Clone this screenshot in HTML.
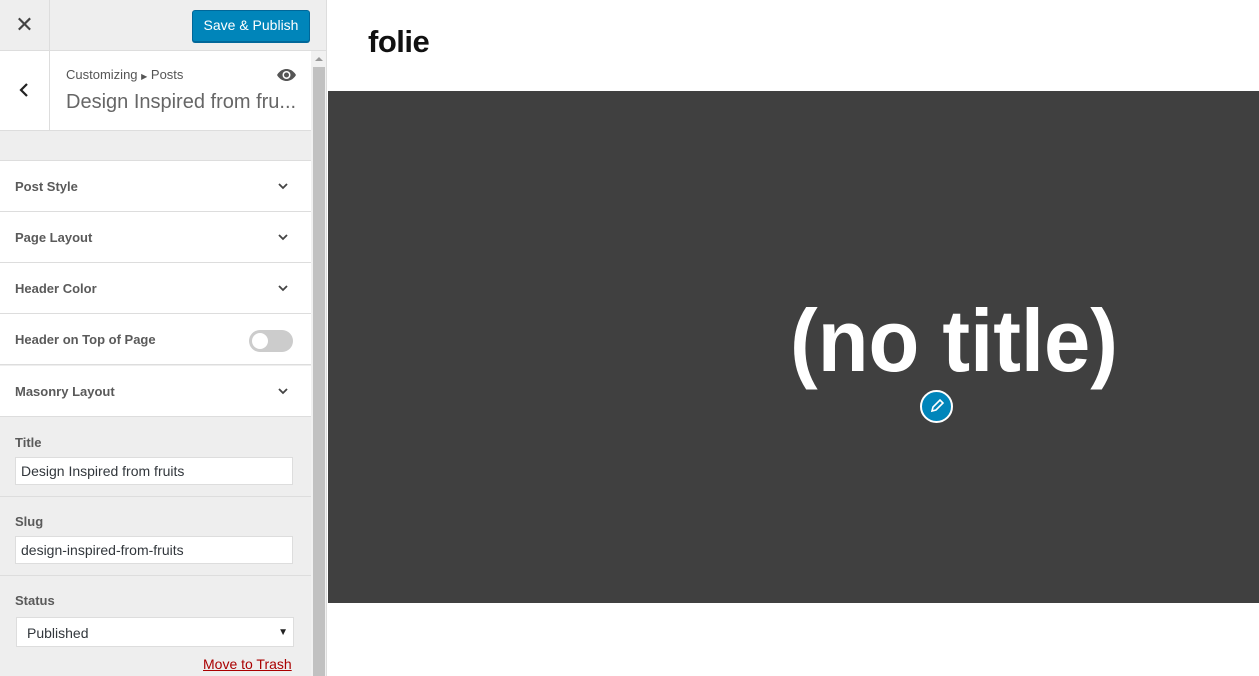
<!DOCTYPE html>
<html><head><meta charset="utf-8"><style>
*{margin:0;padding:0;box-sizing:border-box}
body{width:1259px;height:676px;overflow:hidden;font-family:"Liberation Sans",sans-serif;background:#fff;position:relative}
.side{position:absolute;left:0;top:0;width:327px;height:676px;background:#eee;border-right:1px solid #ddd}
.top{position:absolute;left:0;top:0;width:327px;height:51px;border-bottom:1px solid #ddd}
.x{position:absolute;left:0;top:0;width:50px;height:50px;border-right:1px solid #ddd;font-size:22px;color:#444;text-align:center;line-height:50px}
.btn{position:absolute;left:192px;top:10px;width:118px;height:32px;background:#0085ba;border:1px solid #006799;border-radius:3px;color:#fff;font-size:14px;text-align:center;line-height:29px;box-shadow:0 1px 0 #006799}
.hdr{position:absolute;left:0;top:51px;width:311px;height:80px;background:#fff;border-bottom:1px solid #ddd}
.back{position:absolute;left:0;top:0;width:50px;height:79px;border-right:1px solid #ddd}
.crumb{position:absolute;left:66px;top:16px;font-size:13px;color:#555}
.ptitle{position:absolute;left:66px;top:40px;font-size:20px;color:#666;font-weight:300}
.row{position:absolute;left:0;width:311px;height:51px;background:#fff;border-bottom:1px solid #ddd;font-size:13px;font-weight:bold;color:#5a5a5a;padding-left:15px;line-height:51px}
.row svg{position:absolute;right:23px;top:22px}
.lbl{position:absolute;left:15px;font-size:13px;font-weight:bold;color:#5a5a5a}
.inp{position:absolute;left:15px;width:278px;height:28px;background:#fff;border:1px solid #ddd;font-size:14px;color:#32373c;padding-left:5px;line-height:26px}
.sep{position:absolute;left:0;width:311px;height:1px;background:#ddd}
.track{position:absolute;left:311px;top:51px;width:15px;height:625px;background:#f1f1f1}
.thumb{position:absolute;left:313px;top:67px;width:12px;height:609px;background:#c1c1c1}
.logo{position:absolute;left:368px;top:24px;font-size:31px;font-weight:bold;color:#111;letter-spacing:-0.5px}
.hero{position:absolute;left:328px;top:91px;width:931px;height:512px;background:#404040}
.ht{position:absolute;left:790px;top:286px;font-size:88px;font-weight:bold;color:#fff;line-height:110px;letter-spacing:0;transform:scaleX(0.945);transform-origin:left}
.pen{position:absolute;left:920px;top:390px;width:33px;height:33px;border-radius:50%;background:#0085ba;border:2px solid #fff}
</style></head><body>
<div class="side">
<div class="top"><div class="x">✕</div><div class="btn">Save &amp; Publish</div></div>
<div class="hdr"><div class="back"><svg width="50" height="79"><path d="M27 33l-6 6 6 6" stroke="#222" stroke-width="2.2" fill="none"/></svg></div>
<div class="crumb">Customizing <span style="font-size:8px">▶</span> Posts</div>
<svg style="position:absolute;left:276px;top:17px" width="21" height="14"><path d="M1 7C4 2 8 1 10.5 1S17 2 20 7C17 12 13 13 10.5 13S4 12 1 7Z" fill="#555"/><circle cx="10.5" cy="7" r="4" fill="#fff"/><circle cx="10.5" cy="7" r="2.5" fill="#555"/></svg>
<div class="ptitle">Design Inspired from fru...</div></div>
<div class="sep" style="top:160px"></div>
<div class="row" style="top:161px">Post Style<svg width="10" height="7"><path d="M1 1l4 4 4-4" stroke="#444" stroke-width="1.8" fill="none"/></svg></div>
<div class="row" style="top:212px">Page Layout<svg width="10" height="7"><path d="M1 1l4 4 4-4" stroke="#444" stroke-width="1.8" fill="none"/></svg></div>
<div class="row" style="top:263px">Header Color<svg width="10" height="7"><path d="M1 1l4 4 4-4" stroke="#444" stroke-width="1.8" fill="none"/></svg></div>
<div class="row" style="top:314px">Header on Top of Page<div style="position:absolute;left:249px;top:16px;width:44px;height:22px;border-radius:11px;background:#ccc"><div style="position:absolute;left:3px;top:3px;width:16px;height:16px;border-radius:50%;background:#fff"></div></div></div>
<div class="row" style="top:366px">Masonry Layout<svg width="10" height="7"><path d="M1 1l4 4 4-4" stroke="#444" stroke-width="1.8" fill="none"/></svg></div>
<div class="lbl" style="top:435px">Title</div>
<div class="inp" style="top:457px">Design Inspired from fruits</div>
<div class="sep" style="top:496px"></div>
<div class="lbl" style="top:514px">Slug</div>
<div class="inp" style="top:536px">design-inspired-from-fruits</div>
<div class="sep" style="top:575px"></div>
<div class="lbl" style="top:593px">Status</div>
<div class="inp" style="top:617px;left:16px;height:30px;padding-left:10px;line-height:30px">Published<span style="position:absolute;right:5px;font-size:10px;color:#222">▼</span></div>
<div style="position:absolute;left:203px;top:656px;font-size:14px;color:#a00;text-decoration:underline">Move to Trash</div>
<div class="track"></div><div class="thumb"></div>
<svg style="position:absolute;left:314px;top:56px" width="10" height="6"><path d="M1 5l4-4 4 4z" fill="#999"/></svg>
</div>
<div class="logo">folie</div>
<div class="hero"></div>
<div class="ht">(no title)</div>
<div class="pen"><svg width="29" height="29" viewBox="0 0 29 29"><path d="M10 19l1-4 7-7 3 3-7 7z" fill="none" stroke="#fff" stroke-width="1.6"/></svg></div>
</body></html>
